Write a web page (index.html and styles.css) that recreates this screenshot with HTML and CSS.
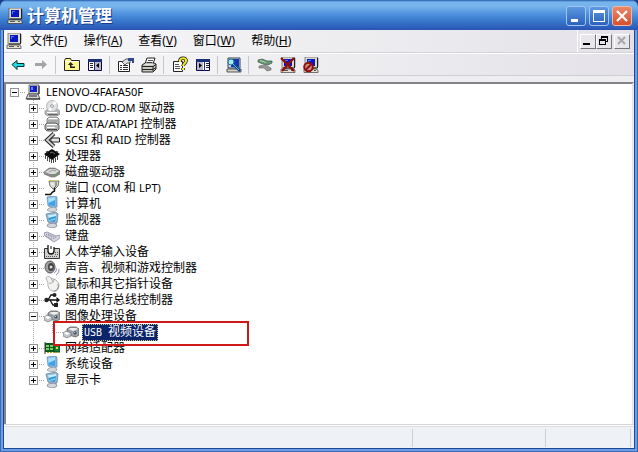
FILE: index.html
```html
<!DOCTYPE html>
<html lang="zh-CN">
<head>
  <meta charset="UTF-8" />
  <title>计算机管理</title>
  <link rel="stylesheet" href="styles.css">
</head>
<body>

  <!-- shared icons -->
  <svg class="sprite" aria-hidden="true">
    <symbol id="i-pc" viewBox="0 0 16 16">
      <path d="M2 0h12l1 1v9l-1 1H2z" fill="#dcd8cc" stroke="#444" stroke-width=".6"/>
      <path d="M14.500 1v10H3" fill="none" stroke="#222"/>
      <rect x="4" y="2" width="8" height="7" fill="#0818c0"/>
      <path d="M5 3h3v1H6v2H5z" fill="#5878f0"/>
      <path d="M1 12h12l2 1v2.500H1z" fill="#e4e0d4" stroke="#222" stroke-width=".6"/>
      <path d="M3 13.500h5M11 13.500h2" stroke="#555"/>
    </symbol>
    <symbol id="i-root" viewBox="0 0 16 16">
      <path d="M4 1h10v9H4z" fill="#d4d0c8" stroke="#555" stroke-width=".8"/>
      <rect x="5" y="2" width="7" height="6" fill="#1020c8"/>
      <path d="M6 3h2v3H6z" fill="#6888f8"/>
      <path d="M3 10h10l2 5H1z" fill="#d4d4dc" stroke="#333" stroke-width=".8"/>
      <path d="M2 15h13M4 12h8" stroke="#222"/>
      <path d="M14 2v8" stroke="#111"/>
    </symbol>
    <symbol id="i-cd" viewBox="0 0 16 16">
      <path d="M1 11l3-2h9l3 2v3l-2 1.500H3L1 14z" fill="#b8b8b8" stroke="#888" stroke-width=".7"/>
      <circle cx="8" cy="6" r="5.500" fill="#dfe3e6" stroke="#aaa" stroke-width=".8"/>
      <path d="M8 6l2-5 3 2zM8 6l-4 4 3 1z" fill="#fff"/>
      <circle cx="8" cy="6" r="1.400" fill="#fff" stroke="#777" stroke-width=".7"/>
      <path d="M3 12.500h10" stroke="#fff"/>
      <path d="M4 14.500h10" stroke="#666"/>
    </symbol>
    <symbol id="i-ide" viewBox="0 0 16 16">
      <path d="M5 1h8l2 2v5H3V3z" fill="#c4c6c6" stroke="#777" stroke-width=".9"/>
      <path d="M5 2h8l1 1H4z" fill="#fff"/>
      <path d="M4 5h10" stroke="#888"/>
      <path d="M3 7h9l3 2v4l-2 2H3l-2-2V9z" fill="#b4b8b8" stroke="#555" stroke-width=".9"/>
      <path d="M3 8.500h10M3 11.500h8" stroke="#fff"/>
      <path d="M3 13.500h10" stroke="#444"/>
    </symbol>
    <symbol id="i-scsi" viewBox="0 0 16 16">
      <path d="M10 1.500L3 8l7 6.500" fill="none" stroke="#222" stroke-width="4"/>
      <path d="M10 1.500L3 8l7 6.500" fill="none" stroke="#ccc" stroke-width="2"/>
      <path d="M8 6h7.500v4H8L6.500 8z" fill="#e4e4e4" stroke="#222"/>
    </symbol>
    <symbol id="i-cpu" viewBox="0 0 16 16">
      <path d="M8 1l8 5-8 6-8-6z" fill="#0a0a0a"/>
      <path d="M1.500 7v4M3.500 9v4M5.500 10v4M7.500 11v4M9.500 11v4M11.500 10v4M13.500 8v4" stroke="#1a1a1a" stroke-width=".8"/>
      <path d="M4 3.500l-2 1M12 3.500l2 1" stroke="#333" stroke-width="1.500"/>
      <path d="M6 5l2-1 3 2" fill="none" stroke="#888" stroke-width=".8"/>
    </symbol>
    <symbol id="i-disk" viewBox="0 0 16 16">
      <path d="M0 8l5-4h6l5 3v3l-5 3H7L0 10z" fill="#888" stroke="#777" stroke-width=".6"/>
      <path d="M1 8l5-3h5l4 2-4 3H6z" fill="#dcdcdc"/>
      <path d="M5 8l4-2 3 1" fill="none" stroke="#999"/>
      <path d="M11 11h2" stroke="#4a4"/>
    </symbol>
    <symbol id="i-port" viewBox="0 0 16 16">
      <path d="M5 1h10l-1 5-3 3H9L6 6z" fill="#dcdcd4" stroke="#555" stroke-width=".8"/>
      <path d="M5 .5h10" stroke="#d8d020" stroke-dasharray="1 1"/>
      <path d="M12 2v4l-2 2" fill="none" stroke="#555"/>
      <path d="M8 3v2" stroke="#fff"/>
      <path d="M10.500 8v3l-2 1-2 2.500H1" fill="none" stroke="#111" stroke-width="1.500"/>
    </symbol>
    <symbol id="i-blue" viewBox="0 0 16 16">
      <path d="M3 1l8-1 2 1v10l-3 1-6-2z" fill="#8bb4d8" stroke="#6a8cb0" stroke-width=".7"/>
      <path d="M4 2l7-1v9l-6-1z" fill="#38a4f0"/>
      <path d="M4 2l7-1v3L4.500 7z" fill="#a6e0fc"/>
      <path d="M5 12l5-1 3 2-1 2-5 1-4-2z" fill="#d4d8dc" stroke="#8a929a" stroke-width=".7"/>
    </symbol>
    <symbol id="i-mon" viewBox="0 0 16 16">
      <path d="M2 2l10-2 2 2-1 9-3 1-6-2z" fill="#9cb8cc" stroke="#567890" stroke-width=".7"/>
      <path d="M4 3l8-1-1 8-6-1z" fill="#2c90dc"/>
      <path d="M4 3l8-1v2L4.500 6z" fill="#c8f0fc"/>
      <path d="M5 8l6-2v2l-6 1z" fill="#70d8f4"/>
      <path d="M4 12l6-1 3 2-1 2-5 1-4-2z" fill="#d4d8dc" stroke="#778" stroke-width=".7"/>
    </symbol>
    <symbol id="i-kbd" viewBox="0 0 16 16">
      <path d="M0 5l3-1 9 4 4-1v3l-6 4-9-6z" fill="#d8d8e4" stroke="#8888a0" stroke-width=".8"/>
      <path d="M2 6l9 5M4 6l9 4M2 8l7 4" stroke="#777790" stroke-dasharray="1 1"/>
    </symbol>
    <symbol id="i-hid" viewBox="0 0 16 16">
      <path d="M.5 4.500h15v10H.5z" fill="#d0d0cc" stroke="#333"/>
      <path d="M4 1v6c0 4 6 4 6 0V3" fill="#fff" stroke="#111" stroke-width="1.300"/>
      <path d="M7 2v3" stroke="#111"/>
      <path d="M2 12.500h12M11 8.500h4M11 10.500h4" stroke="#555" stroke-dasharray="1 1"/>
    </symbol>
    <symbol id="i-snd" viewBox="0 0 16 16">
      <ellipse cx="6" cy="7" rx="5" ry="6" fill="#a0a0a0" stroke="#555"/>
      <ellipse cx="7" cy="7" rx="3" ry="4" fill="#444"/>
      <circle cx="7" cy="7" r="1.500" fill="#ddd"/>
      <path d="M12 8c1 2 0 4-2 5M15 9c0 3-1 5-3 6" fill="none" stroke="#88a"/>
    </symbol>
    <symbol id="i-mouse" viewBox="0 0 16 16">
      <path d="M2 2c0-2 4-2 5 0l5 2c4 3 4 10-1 11-4 1-8-3-7-8z" fill="#f2f2f0" stroke="#aaa" stroke-width=".9"/>
      <path d="M5 7c3 1 5-1 5-4M7 2l2 4" fill="none" stroke="#999" stroke-width=".8"/>
      <path d="M14 8c1 4-1 7-4 7" fill="none" stroke="#777" stroke-width=".8"/>
    </symbol>
    <symbol id="i-usb" viewBox="0 0 16 16">
      <path d="M2 8h12M4 8l3-5h3M6 8l3 5h3" fill="none" stroke="#111" stroke-width="1.300"/>
      <circle cx="2.500" cy="8" r="2.200" fill="#222"/>
      <path d="M12.500 5l3.500 3-3.500 3z" fill="#111"/>
      <circle cx="10.500" cy="3" r="2" fill="#222"/>
      <rect x="10" y="11" width="4" height="4" fill="#222"/>
    </symbol>
    <symbol id="i-cam" viewBox="0 0 16 16">
      <path d="M4 5l3-2h6l3 2v6l-3 2-4-1-5-2z" fill="#9a9ea2" stroke="#555" stroke-width=".7"/>
      <path d="M5 5l3-1h5l2 1-5 2z" fill="#eee"/>
      <path d="M0 9l3-2 5 2v3l-4 2-4-2z" fill="#c2c8cc" stroke="#777" stroke-width=".7"/>
      <path d="M1 9l2-1 4 1-3 2z" fill="#fff"/>
      <circle cx="12" cy="9" r="2.200" fill="#456" stroke="#ccc" stroke-width=".7"/>
      <path d="M11 8h1v1h-1z" fill="#9cf"/>
    </symbol>
    <symbol id="i-net" viewBox="0 0 16 16">
      <path d="M1 3h10v9H1z" fill="#0a5a1c"/>
      <path d="M2 5h3v2H2zM6 5h3v2H6zM2 8h3v2H2zM6 8h3v2H6z" fill="#7cd068"/>
      <path d="M10 5h6v7h-6z" fill="#188028" stroke="#043"/>
      <path d="M12 7h2v2h-2z" fill="#e0d840"/>
      <path d="M3 12.500h12" stroke="#b0a020" stroke-dasharray="2 1"/>
      <path d="M1 2v12" stroke="#333"/>
    </symbol>
  </svg>

  <div class="window">
    <header class="titlebar">
      <svg class="icon"><use href="#i-pc"/></svg>
      <h1>计算机管理</h1>
      <div class="caption-buttons">
        <button class="caption" aria-label="最小化"><svg viewBox="0 0 18 18"><path d="M4 12h7v3H4z" fill="#fff"/></svg></button>
        <button class="caption" aria-label="最大化"><svg viewBox="0 0 18 18"><path d="M3 3h12v12H3zM4 6v8h10V6z" fill="#fff" fill-rule="evenodd"/></svg></button>
        <button class="caption close" aria-label="关闭"><svg viewBox="0 0 18 18"><path d="M4 4l10 10M14 4L4 14" stroke="#fff" stroke-width="2.200"/></svg></button>
      </div>
    </header>

    <nav class="menubar">
      <svg class="icon"><use href="#i-pc"/></svg>
      <div class="menus">
        <button>文件(<u>F</u>)</button>
        <button>操作(<u>A</u>)</button>
        <button>查看(<u>V</u>)</button>
        <button>窗口(<u>W</u>)</button>
        <button>帮助(<u>H</u>)</button>
      </div>
      <div class="child-buttons">
        <button aria-label="最小化子窗口"><svg viewBox="0 0 13 12"><path d="M2 8h7v2H2z"/></svg></button>
        <button aria-label="还原子窗口"><svg viewBox="0 0 13 12"><path d="M4 1h7v6H9V6h1V3H5v1H4zM2 4h7v6H2zM3 6v3h5V6z" fill-rule="evenodd"/></svg></button>
        <button class="child-close" aria-label="关闭子窗口" disabled><svg viewBox="0 0 13 12"><path d="M3 2l7 7M10 2L3 9" stroke="#a8a8a8" stroke-width="2"/></svg></button>
      </div>
    </nav>

    <div class="toolbar">
      <button aria-label="后退"><svg class="icon" viewBox="0 0 16 16"><path d="M2 7.500l5-4v3h7v3H7v3z" fill="#20d8e0" stroke="#033"/></svg></button>
      <button aria-label="前进" disabled><svg class="icon" viewBox="0 0 16 16"><path d="M14 7.500L9 3v3H2v3h7v3z" fill="#a4a4a4"/></svg></button>
      <span class="sep"></span>
      <button aria-label="向上"><svg class="icon" viewBox="0 0 16 16"><path d="M.5 3.500l1-2h5l1 2h8v10H.5z" fill="#fdf88c" stroke="#222"/><path d="M1 4.500h14" stroke="#fff"/><path d="M6.500 5L4 8h2v3h5V9.500H7.500V8h2z" fill="#222"/></svg></button>
      <button aria-label="显示/隐藏控制台树"><svg class="icon" viewBox="0 0 16 16"><path d="M1.500 2.500h13v11h-13z" fill="#fff" stroke="#104"/><path d="M1 2h14v3H1z" fill="#183078"/><path d="M3 6.500h3M3 8.500h3M3 10.500h3" stroke="#222"/><path d="M7 5h1v9H7z" fill="#183078"/><path d="M8 5h6v8H8z" fill="#b8b8c8"/><path d="M12 6v5L9 8.500z" fill="#000"/></svg></button>
      <span class="sep"></span>
      <button aria-label="属性"><svg class="icon" viewBox="0 0 16 16"><path d="M.5 4.500h11v10H.5z" fill="#fff" stroke="#222"/><path d="M2 8.500h2M5 8.500h5M2 10.500h2M5 10.500h5M2 12.500h2M5 12.500h5" stroke="#333"/><path d="M4 5l4-3h4v4H9L7 8z" fill="#e0e0e0" stroke="#333" stroke-width=".8"/><path d="M10 1h6v5h-2V4h-4z" fill="#304890"/></svg></button>
      <button aria-label="打印"><svg class="icon" viewBox="0 0 16 16"><path d="M4 7l2-6h8l-2 6z" fill="#fff" stroke="#222"/><path d="M7 3.500h5M6 5.500h5" stroke="#555"/><path d="M1 8l3-2h9l2 1v5l-3 3H1z" fill="#c8c8c0" stroke="#222"/><path d="M4 7h8" stroke="#fff"/><path d="M1 9.500h11l3-2M1 12.500h11l3-2M12 9v5" fill="none" stroke="#222"/></svg></button>
      <span class="sep"></span>
      <button aria-label="帮助"><svg class="icon" viewBox="0 0 16 16"><path d="M1.500 4.500h9v10h-9z" fill="#fff" stroke="#222"/><path d="M3 7.500h4M3 9.500h5M3 11.500h5" stroke="#555"/><path d="M8 5V3c1-3 7-2 6 1 0 2-3 3-3 5M11 11v2" fill="none" stroke="#222" stroke-width="3.500"/><path d="M8 5V3c1-3 7-2 6 1 0 2-3 3-3 5M11 11v2" fill="none" stroke="#f4e820" stroke-width="2"/></svg></button>
      <button aria-label="显示/隐藏操作窗格"><svg class="icon" viewBox="0 0 16 16"><path d="M1.500 2.500h13v11h-13z" fill="#fff" stroke="#104"/><path d="M1 2h14v3H1z" fill="#183078"/><path d="M2 5h6v8H2z" fill="#b8b8c8"/><path d="M4 6v5l3-2.500z" fill="#000"/><path d="M9 5h1v9H9z" fill="#183078"/><path d="M11 6.500h3M11 8.500h3M11 10.500h3" stroke="#222"/></svg></button>
      <span class="sep"></span>
      <button aria-label="扫描检测硬件改动"><svg class="icon" viewBox="0 0 16 16"><path d="M2 1h12v10H2z" fill="#ccd8dc" stroke="#345"/><path d="M5 2h8v8H5z" fill="#1238b0"/><path d="M1 12h14v3H1z" fill="#d4d4c8" stroke="#333" stroke-width=".8"/><circle cx="5" cy="5" r="3" fill="#a4e8f8" stroke="#278"/><path d="M7 7l7 7" stroke="#123c90" stroke-width="2.500"/><path d="M7 7l6 6" stroke="#4cc8f0"/></svg></button>
      <span class="sep"></span>
      <button aria-label="更新驱动程序"><svg class="icon" viewBox="0 0 16 16"><path d="M1 3l4-1 5 2h5v2l-4 2-5-1-5-2z" fill="#6c9474" stroke="#465" stroke-width=".8"/><path d="M3 3.500l6 2" stroke="#b0d8b0"/><path d="M2 9l6-1 6 3v2l-4 1-3-3-5 0z" fill="#999" stroke="#666" stroke-width=".6"/></svg></button>
      <button aria-label="卸载"><svg class="icon" viewBox="0 0 16 16"><use href="#i-pc"/><path d="M1 1l13 13M14 1L2 14" stroke="#900c10" stroke-width="2.300"/></svg></button>
      <button aria-label="停用"><svg class="icon" viewBox="0 0 16 16"><use href="#i-pc"/><circle cx="5.500" cy="10" r="4.300" fill="#d08c84" stroke="#8c1010" stroke-width="2"/><path d="M8.500 7l-6 6" stroke="#8c1010" stroke-width="2"/></svg></button>
    </div>

    <main class="panel">
      <ul class="tree">
        <li>
          <div class="row"><button class="toggle open" aria-label="折叠"></button><svg class="icon"><use href="#i-root"/></svg><span class="label"><span class="latin">LENOVO-4FAFA50F</span></span></div>
          <ul class="branch">
            <li><div class="row"><button class="toggle" aria-label="展开"></button><svg class="icon"><use href="#i-cd"/></svg><span class="label"><span class="latin">DVD/CD-ROM</span> 驱动器</span></div></li>
            <li><div class="row"><button class="toggle" aria-label="展开"></button><svg class="icon"><use href="#i-ide"/></svg><span class="label"><span class="latin">IDE ATA/ATAPI</span> 控制器</span></div></li>
            <li><div class="row"><button class="toggle" aria-label="展开"></button><svg class="icon"><use href="#i-scsi"/></svg><span class="label"><span class="latin">SCSI</span> 和 <span class="latin">RAID</span> 控制器</span></div></li>
            <li><div class="row"><button class="toggle" aria-label="展开"></button><svg class="icon"><use href="#i-cpu"/></svg><span class="label">处理器</span></div></li>
            <li><div class="row"><button class="toggle" aria-label="展开"></button><svg class="icon"><use href="#i-disk"/></svg><span class="label">磁盘驱动器</span></div></li>
            <li><div class="row"><button class="toggle" aria-label="展开"></button><svg class="icon"><use href="#i-port"/></svg><span class="label">端口 <span class="latin">(COM</span> 和 <span class="latin">LPT)</span></span></div></li>
            <li><div class="row"><button class="toggle" aria-label="展开"></button><svg class="icon"><use href="#i-blue"/></svg><span class="label">计算机</span></div></li>
            <li><div class="row"><button class="toggle" aria-label="展开"></button><svg class="icon"><use href="#i-mon"/></svg><span class="label">监视器</span></div></li>
            <li><div class="row"><button class="toggle" aria-label="展开"></button><svg class="icon"><use href="#i-kbd"/></svg><span class="label">键盘</span></div></li>
            <li><div class="row"><button class="toggle" aria-label="展开"></button><svg class="icon"><use href="#i-hid"/></svg><span class="label">人体学输入设备</span></div></li>
            <li><div class="row"><button class="toggle" aria-label="展开"></button><svg class="icon"><use href="#i-snd"/></svg><span class="label">声音、视频和游戏控制器</span></div></li>
            <li><div class="row"><button class="toggle" aria-label="展开"></button><svg class="icon"><use href="#i-mouse"/></svg><span class="label">鼠标和其它指针设备</span></div></li>
            <li><div class="row"><button class="toggle" aria-label="展开"></button><svg class="icon"><use href="#i-usb"/></svg><span class="label">通用串行总线控制器</span></div></li>
            <li>
              <div class="row"><button class="toggle open" aria-label="折叠"></button><svg class="icon"><use href="#i-cam"/></svg><span class="label">图像处理设备</span></div>
              <ul class="branch">
                <li class="marked"><div class="row"><span class="stub"></span><svg class="icon"><use href="#i-cam"/></svg><span class="label selected"><span class="mono">USB </span>视频设备</span></div></li>
              </ul>
            </li>
            <li><div class="row"><button class="toggle" aria-label="展开"></button><svg class="icon"><use href="#i-net"/></svg><span class="label">网络适配器</span></div></li>
            <li><div class="row"><button class="toggle" aria-label="展开"></button><svg class="icon"><use href="#i-blue"/></svg><span class="label">系统设备</span></div></li>
            <li><div class="row"><button class="toggle" aria-label="展开"></button><svg class="icon"><use href="#i-mon"/></svg><span class="label">显示卡</span></div></li>
          </ul>
        </li>
      </ul>
    </main>

    <footer class="statusbar">
      <span class="pane main"></span>
      <span class="pane"></span>
      <span class="pane last"></span>
    </footer>
  </div>

</body>
</html>
```
FILE: styles.css
```css
*, *::after {
  box-sizing: border-box;
}
body {
  margin: 0;
  background: #1c3f94;
  color: #000;
  font: 12px/16px "Noto Sans", "Noto Sans CJK SC", sans-serif;
}
button {
  margin: 0; padding: 0;
  border: none;
  background: none;
  font: inherit;
  color: inherit;
}
ul {
  list-style: none;
  margin: 0; padding: 0;
}
.sprite {
  display: none;
}
.icon {
  width: 16px; height: 16px;
  flex: none;
}
.window {
  display: flex;
  flex-direction: column;
  height: 100vh;
  padding: 0 4px 4px;
  border-radius: 7px 7px 0 0;
  background: #1c4894;
  box-shadow: inset 0 0 0 1px #3c68b4, inset 0 0 0 3px #6c9ce4;
  overflow: hidden;
}

/* title bar */
.titlebar {
  display: flex;
  align-items: center;
  gap: 4px;
  height: 30px;
  margin: 0 -4px;
  padding: 2px 6px 0 7px;
  border-radius: 7px 7px 0 0;
  background: linear-gradient(#2a5cae 0, #74b4ec 2px, #78b4ec 6px, #5496e0 13px, #3878cc 21px, #2a54b4 30px);
  flex: none;
}
.titlebar h1 {
  flex: 1;
  margin: 0;
  color: #fff;
  font-size: 17px;
  line-height: 24px;
  text-shadow: 1px 1px #1c3c88;
}
.caption-buttons {
  display: flex;
  gap: 3px;
}
.caption {
  width: 20px; height: 20px;
  border: 1px solid #a4c4f0;
  border-radius: 3px;
  background: linear-gradient(#5c98e0, #2c62bc);
}
.caption svg {
  display: block;
  width: 18px; height: 18px;
}
.caption.close {
  border-color: #f0b8a8;
  background: linear-gradient(#e88868, #d8502c);
}

/* menu and tool bars */
.menubar, .toolbar {
  display: flex;
  align-items: center;
  flex: none;
  background: linear-gradient(90deg, #f8f8fa, #f0f0f2 40%, #e4e2e8);
}
.menubar {
  height: 23px;
  padding-left: 2px;
  border-bottom: 1px solid #d4d2d8;
}
.menus {
  display: flex;
  flex: 1;
  gap: 16px;
  padding-left: 8px;
}
.child-buttons {
  display: flex;
  align-self: stretch;
  align-items: center;
  padding: 0 4px 0 2px;
  border-left: 1px solid #fff;
}
.child-buttons button {
  width: 16px; height: 15px;
  border: 1px solid;
  border-color: #fff #777 #777 #fff;
  background: #e8e6ea;
}
.child-buttons svg {
  display: block;
  width: 13px; height: 12px;
}
.child-buttons .child-close {
  margin-left: 2px;
}
.toolbar {
  height: 23px;
  padding: 0 2px;
  border-top: 1px solid #fff;
  border-bottom: 1px solid #d0ced4;
}
.toolbar button {
  display: flex;
  justify-content: center;
  align-items: center;
  width: 23px; height: 22px;
}
.toolbar svg {
  overflow: visible;
}
.sep {
  width: 1px; height: 18px;
  margin: 0 4px 0 3px;
  background: #c8c6cc;
}

/* device tree */
.panel {
  flex: 1;
  min-height: 0;
  margin-top: 6px;
  padding: 0 4px;
  border: solid #848488;
  border-width: 2px 2px 0 2px;
  border-right-color: #e8e6ea;
  background: #fff;
  box-shadow: 0 -6px #eeedf0;
}
.row {
  display: flex;
  align-items: center;
  height: 16px;
  background: repeating-linear-gradient(90deg, #aaa 0 1px, #fff 1px 2px) 4px 8px / 11px 1px no-repeat;
}
.branch {
  padding-left: 19px;
}
.branch li {
  background: repeating-linear-gradient(#aaa 0 1px, #fff 1px 2px) 4px 0 / 1px 100% no-repeat;
}
.branch li:last-child {
  background-size: 1px 8px;
}
.toggle, .stub {
  width: 9px; height: 9px;
  margin-right: 6px;
  flex: none;
}
.toggle {
  border: 1px solid #949494;
  background:
    linear-gradient(#000, #000) 1px 3px / 5px 1px no-repeat,
    linear-gradient(#000, #000) 3px 1px / 1px 5px no-repeat,
    #fff;
}
.toggle.open {
  background: linear-gradient(#000, #000) 1px 3px / 5px 1px no-repeat, #fff;
}
.label {
  margin-left: 3px;
  padding: 0 2px;
  white-space: nowrap;
}
.latin {
  font-size: 11px;
}
.label.selected {
  outline: 1px dotted #d8c890;
  outline-offset: -1px;
  background: #0a246a;
  color: #fff;
}
.mono {
  font-family: "DejaVu Sans Mono", monospace;
  font-size: 10px;
  white-space: pre;
}
.marked {
  position: relative;
}
.marked::after {
  content: "";
  position: absolute;
  top: -3px; left: 5px;
  width: 196px; height: 25px;
  border: 2px solid #d01818;
}

/* status bar */
.statusbar {
  display: flex;
  flex: none;
  height: 24px;
  padding: 4px 3px 1px;
  border-top: 1px solid #d4d4d4;
  background: #eef2f6;
  box-shadow: inset 0 1px #fff, inset 0 2px #dcdcdc;
}
.pane {
  width: 133px;
  border-right: 1px solid #ccd0d4;
}
.pane.main {
  flex: 1;
}
.pane.last {
  width: 85px;
}
```
